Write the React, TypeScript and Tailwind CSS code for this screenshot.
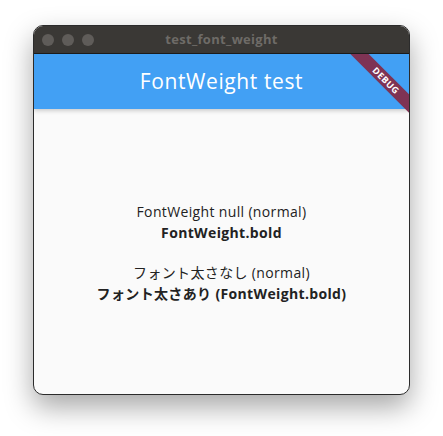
export default function App() {
  const sans = '[font-family:"Open_Sans","Noto_Sans_CJK_JP",sans-serif]'
  return (
    <div className={`w-[443px] h-[436px] bg-white pt-[25px] pl-[33px] ${sans}`}>
      <div className="w-[377px] h-[370px] rounded-[10px] border border-[#2b2b2b] overflow-hidden flex flex-col bg-[#fafafa] shadow-[0_12px_28px_rgba(0,0,0,0.35)]">
        <div className="relative h-[28px] bg-[#3a3835] flex items-center border-b border-[#1c1c1c] shrink-0">
          <div className="flex gap-[8px] pl-[8px]">
            <span className="w-[12px] h-[12px] rounded-full bg-[#5f5c59]" />
            <span className="w-[12px] h-[12px] rounded-full bg-[#5f5c59]" />
            <span className="w-[12px] h-[12px] rounded-full bg-[#5f5c59]" />
          </div>
          <div className="absolute inset-0 flex items-center justify-center text-[13px] font-bold text-[#6e6b67] tracking-[0.3px]">
            test_font_weight
          </div>
        </div>
        <div className="relative h-[55px] bg-[#42a0f4] flex items-center justify-center text-white text-[21px] tracking-[0.6px] shrink-0 shadow-[0_2px_4px_rgba(0,0,0,0.18)] z-10">
          FontWeight test
          <div className="absolute top-0 right-0 w-[60px] h-[60px] overflow-hidden">
            <div className="absolute left-[-13px] top-[20px] w-[100px] h-[13px] rotate-45 bg-[#7e3354] flex items-center justify-center text-[9px] font-bold text-white tracking-[0.5px] leading-none">
              DEBUG
            </div>
          </div>
        </div>
        <div className="flex-1 flex flex-col items-center justify-center text-[14px] text-[#222] leading-[21px] tracking-[0.35px] pt-[2px]">
          <div>FontWeight null (normal)</div>
          <div className="font-bold">FontWeight.bold</div>
          <div className="h-[19px]" />
          <div>フォント太さなし (normal)</div>
          <div className="font-bold">フォント太さあり (FontWeight.bold)</div>
        </div>
      </div>
    </div>
  )
}
